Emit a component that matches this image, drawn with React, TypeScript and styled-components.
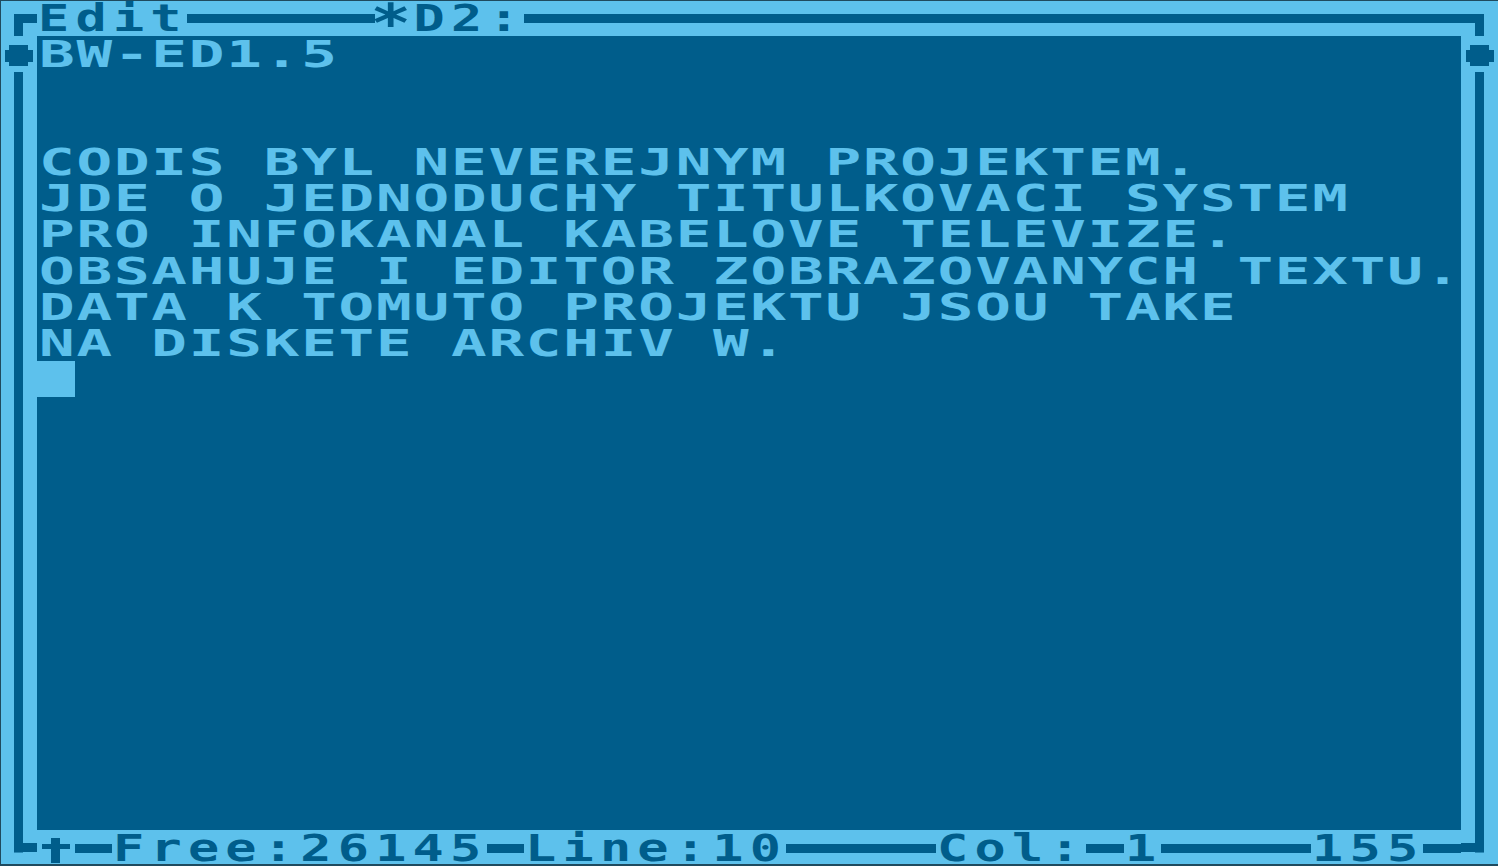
import React from "react";
import styled, { createGlobalStyle } from "styled-components";

const LIGHT = "#5dc1ec";
const DARK = "#005d8b";
const EDGE = "#1f4a5e";

const COLS = 40;
const ROWS = 24;
const W = 1498;
const H = 866;
const CW = W / COLS; // one character cell: 37.45px
const CH = H / ROWS; // 36.083px
const PX = CW / 8; // one Atari pixel, horizontally
const PY = CH / 8; // one Atari pixel, vertically
const FONT_SIZE = 37;
const ADVANCE = 0.60205 * FONT_SIZE; // DejaVu Sans Mono advance

const MAIN_SCALE = 1.6;
const STATUS_SCALE = 1.4;

const spacing = (scale: number) => CW / scale - ADVANCE;

const GlobalStyle = createGlobalStyle`
  html, body {
    margin: 0;
    padding: 0;
    background: ${LIGHT};
    overflow: hidden;
  }
  #root {
    width: ${W}px;
    height: ${H}px;
  }
`;

const Screen = styled.main`
  width: ${W}px;
  height: ${H}px;
  display: grid;
  grid-template-columns: ${CW}px 1fr ${CW}px;
  grid-template-rows: ${CH}px 1fr ${CH}px;
  background: ${LIGHT};
  box-shadow: inset 0 1px 0 ${EDGE}, inset 0 -2px 0 ${EDGE}, inset 1px 0 0 ${EDGE};
  font-family: "DejaVu Sans Mono", "Liberation Mono", monospace;
  font-weight: 700;
  font-size: ${FONT_SIZE}px;
`;

const FrameRow = styled.div`
  grid-column: 1 / -1;
  display: grid;
  grid-template-columns: repeat(${COLS}, 1fr);
  height: ${CH}px;
`;

type CornerPos = "tl" | "tr" | "bl" | "br";

const bar = (x: number, y: number, w: number, h: number) =>
  `linear-gradient(${DARK}, ${DARK}) ${x}px ${y}px / ${w}px ${h}px no-repeat`;

const cornerBackground = (pos: CornerPos) => {
  const x3 = 3 * PX;
  const w2 = 2 * PX;
  const y3 = 3 * PY;
  const h2 = 2 * PY;
  const horizontal =
    pos[1] === "l" ? bar(x3, y3, CW - x3, h2) : bar(0, y3, x3 + w2, h2);
  const vertical =
    pos[0] === "t" ? bar(x3, y3, w2, CH - y3) : bar(x3, 0, w2, y3 + h2);
  return `${horizontal}, ${vertical}`;
};

const Corner = styled.span<{ $pos: CornerPos }>`
  display: block;
  background: ${({ $pos }) => cornerBackground($pos)};
`;

const HLine = styled.span<{ $span: number }>`
  grid-column: span ${({ $span }) => $span};
  background: linear-gradient(
    to bottom,
    transparent ${3 * PY}px,
    ${DARK} ${3 * PY}px,
    ${DARK} ${5 * PY}px,
    transparent ${5 * PY}px
  );
`;

const Label = styled.span<{ $span: number }>`
  grid-column: span ${({ $span }) => $span};
  color: ${DARK};
  white-space: pre;
  line-height: ${CH}px;
  letter-spacing: ${spacing(STATUS_SCALE)}px;
  transform: translate(1px, 1px) scaleX(${STATUS_SCALE});
  transform-origin: 0 0;
`;

const Star = styled.span`
  display: inline-block;
  transform: translate(0px, 6px) scale(1.3, 1.45);
`;

const GlyphCell = styled.span`
  display: block;
`;

const PixelArt = styled.svg`
  display: block;
  width: 100%;
  height: 100%;
  fill: ${DARK};
  shape-rendering: crispEdges;
`;

const SideColumn = styled.div`
  display: flex;
  flex-direction: column;
`;

const DotCell = styled.div`
  flex: none;
  height: ${CH}px;
`;

const VLine = styled.div`
  flex: 1;
  background: linear-gradient(
    to right,
    transparent ${3 * PX}px,
    ${DARK} ${3 * PX}px,
    ${DARK} ${5 * PX}px,
    transparent ${5 * PX}px
  );
`;

const Editor = styled.section`
  background: ${DARK};
  display: flex;
  flex-direction: column;
  overflow: hidden;
`;

const EditorRow = styled.div`
  flex: none;
  height: ${CH}px;
  color: ${LIGHT};
  white-space: pre;
  line-height: ${CH}px;
  letter-spacing: ${spacing(MAIN_SCALE)}px;
  transform: translate(2px, 1px) scaleX(${MAIN_SCALE});
  transform-origin: 0 0;
`;

const Cursor = styled.div`
  flex: none;
  width: ${CW}px;
  height: ${CH}px;
  background: ${LIGHT};
`;

const Dot = () => (
  <DotCell>
    <PixelArt viewBox="0 0 8 8" preserveAspectRatio="none">
      <rect x={2} y={2.1} width={4} height={1.1} />
      <rect x={1} y={3} width={6} height={2.8} />
      <rect x={2} y={5.6} width={4} height={1} />
    </PixelArt>
  </DotCell>
);

const UpArrow = () => (
  <GlyphCell>
    <PixelArt viewBox="0 0 8 8" preserveAspectRatio="none">
      <rect x={3} y={1.8} width={2} height={1.2} />
      <rect x={1} y={3} width={6} height={1} />
      <rect x={3} y={4} width={2} height={3} />
    </PixelArt>
  </GlyphCell>
);

const lines: string[] = [
  "BW-ED1.5",
  "",
  "",
  "CODIS BYL NEVEREJNYM PROJEKTEM.",
  "JDE O JEDNODUCHY TITULKOVACI SYSTEM",
  "PRO INFOKANAL KABELOVE TELEVIZE.",
  "OBSAHUJE I EDITOR ZOBRAZOVANYCH TEXTU.",
  "DATA K TOMUTO PROJEKTU JSOU TAKE",
  "NA DISKETE ARCHIV W.",
];

export default function App() {
  return (
    <>
      <GlobalStyle />
      <Screen>
        <FrameRow>
          <Corner $pos="tl" />
          <Label $span={4}>Edit</Label>
          <HLine $span={5} />
          <Label $span={4}>
            <Star>*</Star>D2:
          </Label>
          <HLine $span={25} />
          <Corner $pos="tr" />
        </FrameRow>

        <SideColumn>
          <Dot />
          <VLine />
        </SideColumn>

        <Editor>
          {lines.map((text, i) => (
            <EditorRow key={i}>{text}</EditorRow>
          ))}
          <Cursor />
        </Editor>

        <SideColumn>
          <Dot />
          <VLine />
        </SideColumn>

        <FrameRow>
          <Corner $pos="bl" />
          <UpArrow />
          <HLine $span={1} />
          <Label $span={10}>Free:26145</Label>
          <HLine $span={1} />
          <Label $span={7}>Line:10</Label>
          <HLine $span={4} />
          <Label $span={4}>Col:</Label>
          <HLine $span={1} />
          <Label $span={1}>1</Label>
          <HLine $span={4} />
          <Label $span={3}>155</Label>
          <HLine $span={1} />
          <Corner $pos="br" />
        </FrameRow>
      </Screen>
    </>
  );
}
